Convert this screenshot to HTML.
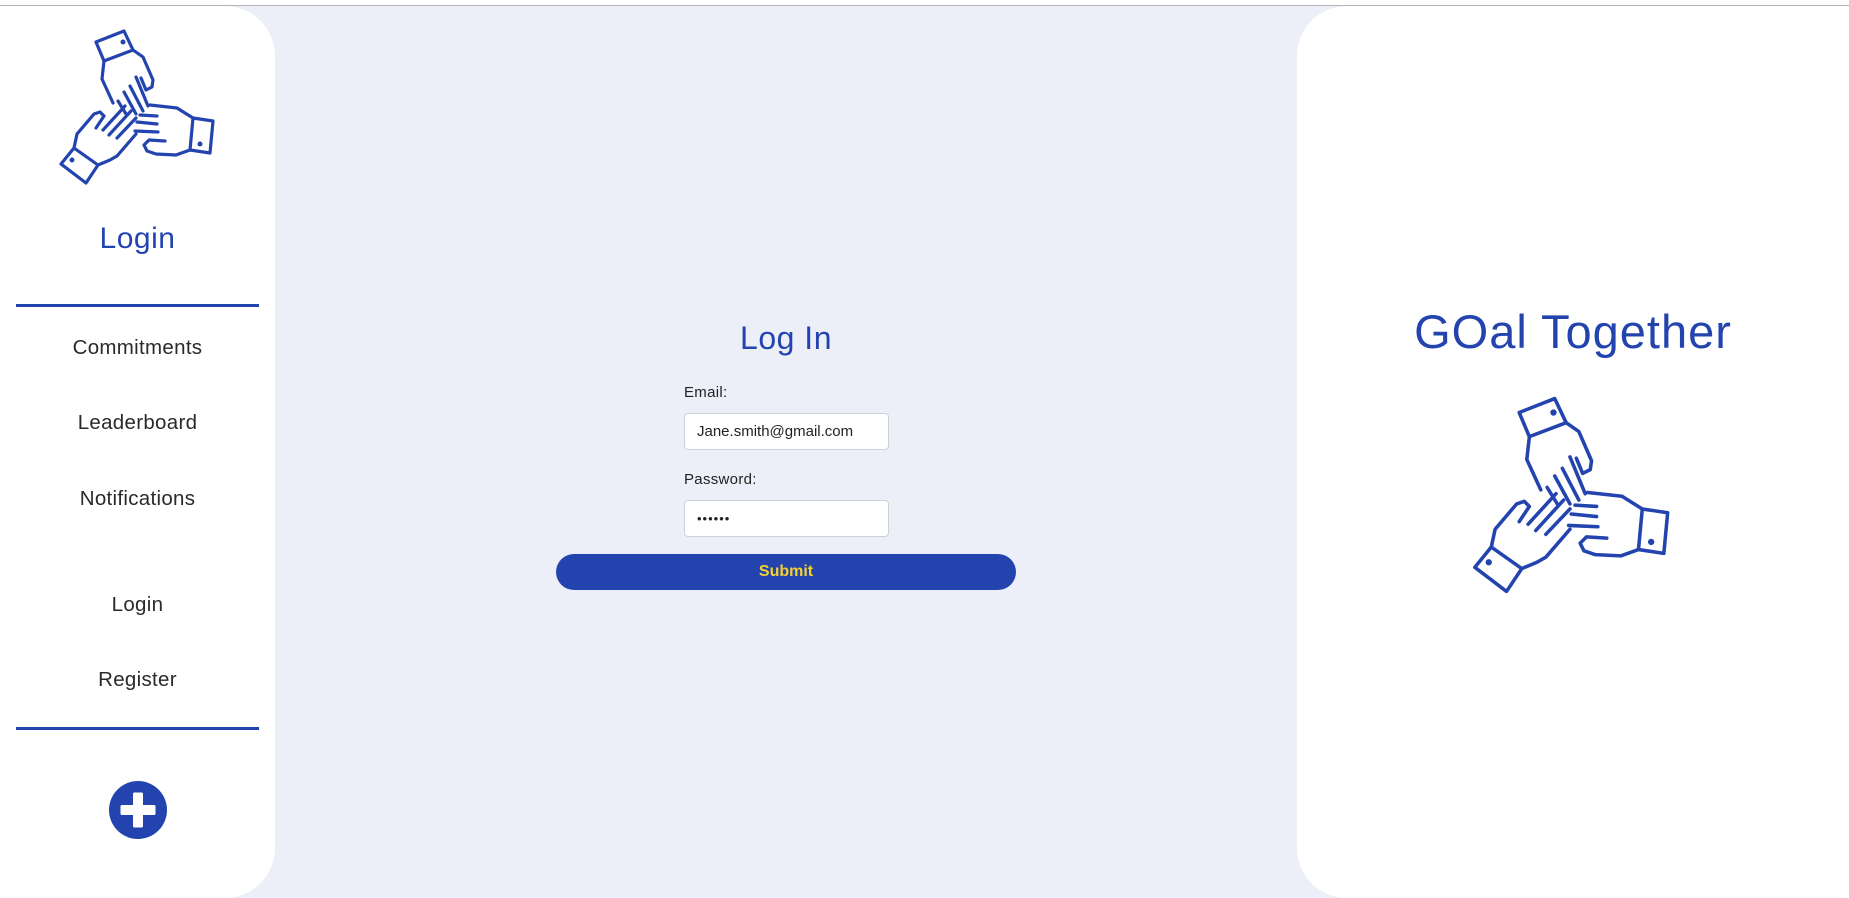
<!DOCTYPE html>
<html><head><meta charset="utf-8"><style>
*{margin:0;padding:0;box-sizing:border-box}
html,body{width:1849px;height:898px;overflow:hidden;background:#fff;font-family:"Liberation Sans",sans-serif}
#top{position:absolute;left:0;top:5px;width:1849px;height:1px;background:#b3b3b3}
#bg{position:absolute;left:0;top:6px;width:1849px;height:892px;background:#eceef8}
#side{position:absolute;left:0;top:6px;width:275px;height:892px;background:#fff;border-radius:0 50px 50px 0}
#right{position:absolute;left:1297px;top:6px;width:552px;height:892px;background:#fff;border-radius:50px 0 0 50px}
.abs{position:absolute}
.ctr{position:absolute;left:0;width:275px;text-align:center}
.nav{font-size:20.5px;color:#2a2a2a;letter-spacing:.3px;line-height:24px}
.div{position:absolute;left:16px;width:243px;height:3px;background:#2344ae}
.blue{color:#2344ae}
input{position:absolute;left:684px;width:205px;height:37px;border:1px solid #cdd0d8;border-radius:4px;background:#fff;font-family:"Liberation Sans",sans-serif;font-size:15px;color:#222;padding-left:12px}
.lbl{position:absolute;left:684px;font-size:15px;color:#222;letter-spacing:.3px}
#btn{position:absolute;left:556px;top:554px;width:460px;height:36px;background:#2344ae;border-radius:18px;color:#f5d130;font-weight:bold;font-size:16px;text-align:center;line-height:36px}
</style></head><body>
<div id="top"></div><div id="bg"></div>
<div id="side"></div>
<div id="right"></div>

<svg class="abs" style="left:58px;top:26px" width="160" height="162" viewBox="58 26 160 162" fill="none" stroke="#2344ae" stroke-width="3.2" stroke-linejoin="round" stroke-linecap="round">
<path d="M96 42 L124 31 L133 50 L104 61 Z"/><circle cx="123" cy="42" r="2.5" fill="#2344ae" stroke="none"/>
<path d="M104 61 L102 79 L113 103 M133 50 L143 57 L153 80 L152 87 L146 90 L141 78"/>
<path d="M136 77 L148 106 M130 86 L143 111 M124 92 L136 114 M118 101 L126 114"/>
<path d="M193 118 L213 121 L210 153 L190 150 Z"/><circle cx="200" cy="144" r="2.5" fill="#2344ae" stroke="none"/>
<path d="M193 118 L177 108 L150 105 M190 150 L176 155 L156 154 L147 151 L144 145 L149 140 L165 141"/>
<path d="M140 115 L157 116 M137 122 L157 124 M135 131 L158 132"/>
<path d="M61 164 L74 148 L98 165 L86 183 Z"/><circle cx="72" cy="160" r="2.5" fill="#2344ae" stroke="none"/>
<path d="M74 148 L77 134 L94 114 L100 112 L104 116 L96 128 M98 165 L110 160 L117 156 L136 134"/>
<path d="M103 130 L125 106 M109 135 L131 111 M117 138 L136 118"/>
</svg>
<div class="ctr blue" style="top:222px;font-size:30px;letter-spacing:.5px">Login</div>
<div class="div" style="top:304px"></div>
<div class="ctr nav" style="top:336px">Commitments</div>
<div class="ctr nav" style="top:411px">Leaderboard</div>
<div class="ctr nav" style="top:487px">Notifications</div>
<div class="ctr nav" style="top:593px">Login</div>
<div class="ctr nav" style="top:668px">Register</div>
<div class="div" style="top:727px"></div>
<svg class="abs" style="left:108px;top:780px" width="60" height="60" viewBox="0 0 60 60">
<circle cx="30" cy="30" r="29" fill="#2344ae"/>
<rect x="12.5" y="25" width="35" height="10" rx="1.5" fill="#fff"/>
<rect x="25" y="12.5" width="10" height="35" rx="1.5" fill="#fff"/>
</svg>

<div class="abs blue" style="left:556px;width:460px;text-align:center;top:320px;font-size:32px;letter-spacing:.5px">Log In</div>
<div class="lbl" style="top:384px">Email:</div>
<input style="top:413px" value="Jane.smith@gmail.com">
<div class="lbl" style="top:471px">Password:</div>
<input style="top:500px;font-size:13px;letter-spacing:1px" value="••••••">
<div id="btn">Submit</div>

<div class="abs blue" style="left:1297px;width:552px;text-align:center;top:304px;font-size:47px;letter-spacing:1px">GOal Together</div>
<svg class="abs" style="left:1471px;top:392px" width="203" height="206" viewBox="58 26 160 162" fill="none" stroke="#2344ae" stroke-width="2.8" stroke-linejoin="round" stroke-linecap="round">
<path d="M96 42 L124 31 L133 50 L104 61 Z"/><circle cx="123" cy="42" r="2.5" fill="#2344ae" stroke="none"/>
<path d="M104 61 L102 79 L113 103 M133 50 L143 57 L153 80 L152 87 L146 90 L141 78"/>
<path d="M136 77 L148 106 M130 86 L143 111 M124 92 L136 114 M118 101 L126 114"/>
<path d="M193 118 L213 121 L210 153 L190 150 Z"/><circle cx="200" cy="144" r="2.5" fill="#2344ae" stroke="none"/>
<path d="M193 118 L177 108 L150 105 M190 150 L176 155 L156 154 L147 151 L144 145 L149 140 L165 141"/>
<path d="M140 115 L157 116 M137 122 L157 124 M135 131 L158 132"/>
<path d="M61 164 L74 148 L98 165 L86 183 Z"/><circle cx="72" cy="160" r="2.5" fill="#2344ae" stroke="none"/>
<path d="M74 148 L77 134 L94 114 L100 112 L104 116 L96 128 M98 165 L110 160 L117 156 L136 134"/>
<path d="M103 130 L125 106 M109 135 L131 111 M117 138 L136 118"/>
</svg>
</body></html>
